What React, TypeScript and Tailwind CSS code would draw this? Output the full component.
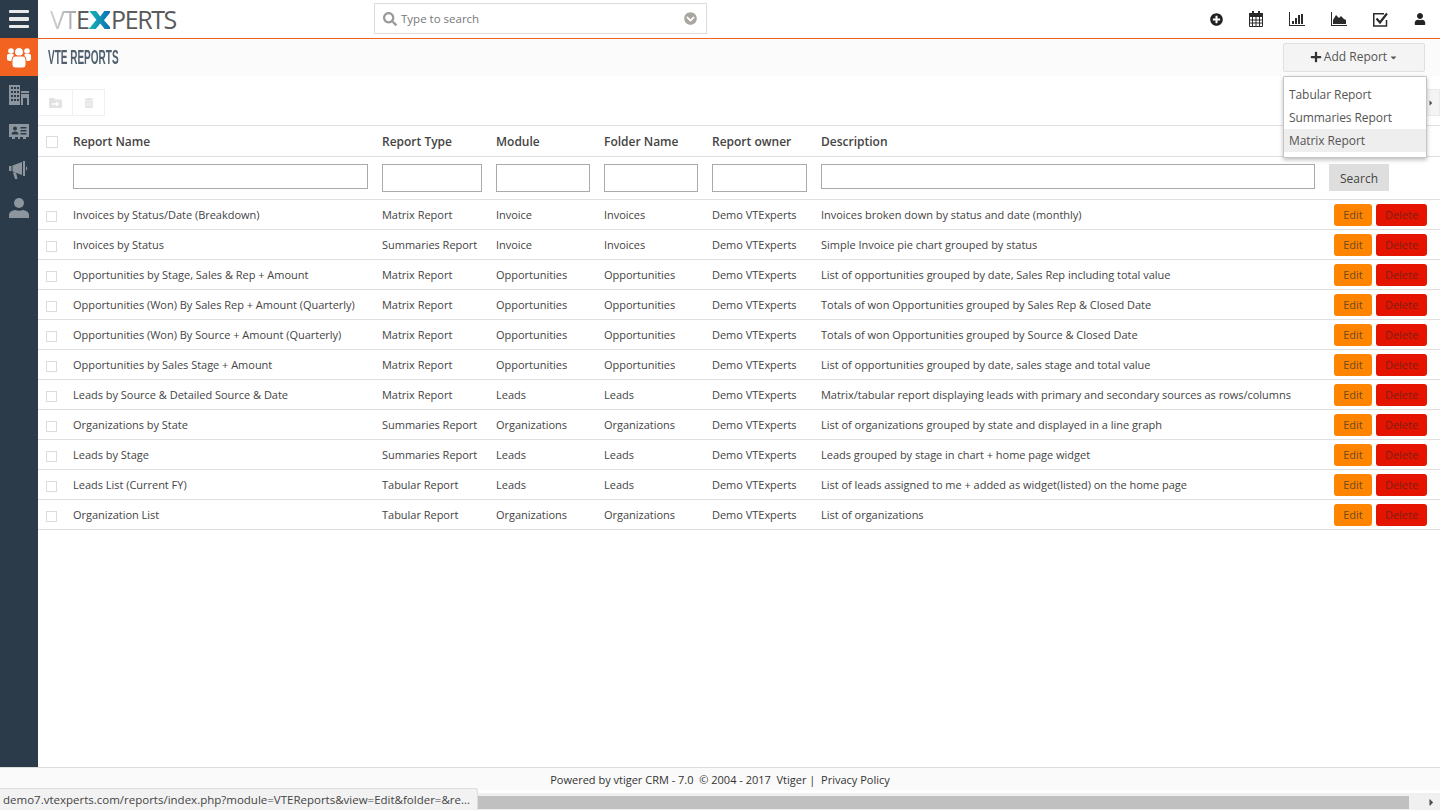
import React from "react";
import { FaSearch, FaChevronCircleDown, FaTrashAlt, FaPlus, FaCaretDown, FaCaretRight, FaUser, FaPlusCircle } from "react-icons/fa";

const rows = [
  ["Invoices by Status/Date (Breakdown)", "Matrix Report", "Invoice", "Invoices", "Invoices broken down by status and date (monthly)"],
  ["Invoices by Status", "Summaries Report", "Invoice", "Invoices", "Simple Invoice pie chart grouped by status"],
  ["Opportunities by Stage, Sales & Rep + Amount", "Matrix Report", "Opportunities", "Opportunities", "List of opportunities grouped by date, Sales Rep including total value"],
  ["Opportunities (Won) By Sales Rep + Amount (Quarterly)", "Matrix Report", "Opportunities", "Opportunities", "Totals of won Opportunities grouped by Sales Rep & Closed Date"],
  ["Opportunities (Won) By Source + Amount (Quarterly)", "Matrix Report", "Opportunities", "Opportunities", "Totals of won Opportunities grouped by Source & Closed Date"],
  ["Opportunities by Sales Stage + Amount", "Matrix Report", "Opportunities", "Opportunities", "List of opportunities grouped by date, sales stage and total value"],
  ["Leads by Source & Detailed Source & Date", "Matrix Report", "Leads", "Leads", "Matrix/tabular report displaying leads with primary and secondary sources as rows/columns"],
  ["Organizations by State", "Summaries Report", "Organizations", "Organizations", "List of organizations grouped by state and displayed in a line graph"],
  ["Leads by Stage", "Summaries Report", "Leads", "Leads", "Leads grouped by stage in chart + home page widget"],
  ["Leads List (Current FY)", "Tabular Report", "Leads", "Leads", "List of leads assigned to me + added as widget(listed) on the home page"],
  ["Organization List", "Tabular Report", "Organizations", "Organizations", "List of organizations"],
];

const cols = "grid grid-cols-[35px_309px_114px_108px_108px_109px_508px_1fr]";
const Check = ({ className = "" }: { className?: string }) => (
  <span className={"block border border-[#dcdcdc] bg-white ml-[8px] " + className} />
);

const SIDE = "#8d969e";
const BG = "#2c3b49";

const GroupIcon = () => (
  <svg width="24" height="23" viewBox="0 0 24 23">
    <g fill="#fff">
      <circle cx="4" cy="5" r="2.8" />
      <circle cx="20" cy="5" r="2.8" />
      <path d="M0 9.5q0-1.5 1.5-1.5h5v7H2.500Q0 15 0 13z" />
      <path d="M24 9.500q0-1.500-1.500-1.500h-5v7h4q2.500 0 2.500-2z" />
    </g>
    <g fill="#fff" stroke="#f26322" strokeWidth="1">
      <circle cx="12" cy="6" r="4.500" />
      <path d="M5 14q0-4 3-4h8q3 0 3 4v5q0 3-3 3H8q-3 0-3-3z" />
    </g>
  </svg>
);

const BuildingIcon = () => (
  <svg width="20" height="20" viewBox="0 0 20 20" fill={SIDE}>
    <path d="M0 0h11v20H0z" />
    <path d="M12 6h8v2h-8zM12 9h8v11h-2v-7h-4v7h-2z" />
    <g fill={BG}>
      <path d="M2 2h2v2H2zM5 2h2v2H5zM8 2h2v2H8zM2 6h2v2H2zM5 6h2v2H5zM8 6h2v2H8zM2 10h2v2H2zM5 10h2v2H5zM8 10h2v2H8zM2 14h2v2H2zM5 14h2v2H5zM8 14h2v2H8z" />
    </g>
  </svg>
);

const CardIcon = () => (
  <svg width="20" height="16" viewBox="0 0 20 16">
    <path d="M0 0h20v13H0z" fill={SIDE} />
    <path d="M3 13h3v2H3zM9 13h2v2H9zM14 13h3v2h-3z" fill={SIDE} />
    <circle cx="6" cy="4.500" r="2" fill={BG} />
    <path d="M2.500 10.500q0-3 3.500-3t3.500 3z" fill={BG} />
    <path d="M11.500 3h6v1.500h-6zM11.500 6h6v1.500h-6zM11.500 9h6v1.500h-6z" fill={BG} />
  </svg>
);

const HornIcon = () => (
  <svg width="20" height="19" viewBox="0 0 20 19" fill={SIDE}>
    <path d="M0 5h2.500v5H0zM3.500 4.500 13 1v13L3.500 10.500z" />
    <path d="M14 0h2v15h-2zM17 5q2.500 2.500 0 5z" />
    <path d="M4 11.500h3l1.500 6.500H6z" />
  </svg>
);

const PersonIcon = () => (
  <svg width="20" height="20" viewBox="0 0 20 20" fill={SIDE}>
    <circle cx="10" cy="5" r="5" />
    <path d="M0 20v-3q0-4 6-5 4 1.500 8 0 6 1 6 5v3z" />
  </svg>
);

const CalendarIcon = () => (
  <svg width="14" height="16" viewBox="0 0 14 16">
    <path d="M0.500 2.500h13v13h-13z" fill="#fff" stroke="#2b2b2b" />
    <path d="M0 2h14v4H0z" fill="#2b2b2b" />
    <path d="M3 0h2v4H3zM9 0h2v4H9z" fill="#2b2b2b" />
    <path d="M0 9h14M0 12h14M3.500 6v9M7 6v9M10.500 6v9" stroke="#2b2b2b" strokeWidth="1" fill="none" />
  </svg>
);

const BarIcon = () => (
  <svg width="16" height="14" viewBox="0 0 16 14" fill="#2b2b2b">
    <path d="M0 0h1v13h15v1H0z" />
    <path d="M3 9h2v3H3zM6 6h2v6H6zM9 3h2v9H9zM12 2h2v10h-2z" />
  </svg>
);

const AreaIcon = () => (
  <svg width="16" height="14" viewBox="0 0 16 14" fill="#2b2b2b">
    <path d="M0 0h1v13h15v1H0z" />
    <path d="M2 12V8l3-5 3 3 2-2 3 3 2 1v4z" />
  </svg>
);

const TaskIcon = () => (
  <svg width="15" height="15" viewBox="0 0 15 15" fill="none">
    <path d="M13.500 8v6H.75V1.750H11" stroke="#2b2b2b" strokeWidth="1.500" />
    <path d="M3.500 6.500 7 10.500 14 1.500" stroke="#2b2b2b" strokeWidth="2.200" />
  </svg>
);

const MoveIcon = () => (
  <svg width="13" height="10" viewBox="0 0 13 10" fill="#e2e2e2">
    <path d="M0 1q0-1 1-1h4l1 1.500h6q1 0 1 1V9q0 1-1 1H1q-1 0-1-1z" />
    <path d="M3 5.200h4V3.500L10.500 6 7 8.500V6.800H3z" fill="#fff" />
  </svg>
);

export default function App() {
  return (
    <div className="relative w-[1440px] h-[810px] overflow-hidden bg-white flex flex-col text-[#444] font-['Open_Sans',sans-serif]">
      <header className="h-[39px] shrink-0 flex items-center border-b border-[#f26322] bg-white">
        <div className="w-[38px] h-[38px] bg-[#2c3b49] flex flex-col items-center justify-center gap-[4px] shrink-0">
          <span className="block w-[20px] h-[3.5px] rounded-[1px] bg-[#e8eaec]" />
          <span className="block w-[20px] h-[3.5px] rounded-[1px] bg-[#e8eaec]" />
          <span className="block w-[20px] h-[3.5px] rounded-[1px] bg-[#e8eaec]" />
        </div>
        <div className="w-[336px] pl-[12px] shrink-0 text-[25px] leading-none font-normal tracking-[-1.4px] whitespace-nowrap">
          <span className="bg-gradient-to-r from-[#d2d2d2] to-[#a8a8a8] bg-clip-text text-transparent">VT</span>
          <span className="text-[#5a5a5a]">E</span>
          <span className="inline-block mx-[3px] scale-x-[1.28] font-extrabold bg-gradient-to-r from-[#1fb5b0] to-[#0f6fb5] bg-clip-text text-transparent">X</span>
          <span className="text-[#5a5a5a]">PERTS</span>
        </div>
        <div className="w-[333px] h-[31px] shrink-0 -mt-[1px] border border-[#dcdcdc] flex items-center pl-[8px] pr-[9px] bg-white">
          <FaSearch className="text-[#999] text-[14px] mr-[4px]" />
          <span className="text-[11.5px] text-[#777] flex-1">Type to search</span>
          <FaChevronCircleDown className="text-[#a9a5a0] text-[13px]" />
        </div>
        <div className="ml-auto flex items-center gap-[26px] mr-[14px] text-[#222]">
          <FaPlusCircle className="text-[13px]" />
          <CalendarIcon />
          <BarIcon />
          <AreaIcon />
          <TaskIcon />
          <FaUser className="text-[12px]" />
        </div>
      </header>

      <div className="flex flex-1 min-h-0">
        <aside className="w-[38px] shrink-0 bg-[#2c3b49] flex flex-col items-center">
          <div className="w-[38px] h-[37px] bg-[#f26322] flex items-center justify-center pb-[1px]"><GroupIcon /></div>
          <div className="h-[37px] flex items-center justify-center"><BuildingIcon /></div>
          <div className="h-[38px] flex items-center justify-center"><CardIcon /></div>
          <div className="h-[38px] flex items-center justify-center"><HornIcon /></div>
          <div className="h-[38px] flex items-center justify-center"><PersonIcon /></div>
        </aside>

        <main className="flex-1 min-w-0 flex flex-col">
          <div className="h-[37px] shrink-0 bg-[#fbfbfb] flex items-center justify-between pl-[10px] pr-[15px]">
            <h1 className="origin-left scale-x-[0.5] w-[70px] mb-[2px] text-[20px] leading-none font-bold text-[#50606f] whitespace-nowrap font-['Liberation_Sans',sans-serif]">VTE REPORTS</h1>
            <button className="w-[142px] h-[29px] mt-[-1px] bg-[#f4f4f4] border border-[#e0e0e0] rounded-[2px] flex items-center justify-center text-[12px] text-[#555]">
              <FaPlus className="text-[12px] mr-[2px] text-[#333]" />
              Add Report
              <FaCaretDown className="text-[9px] ml-[2px]" />
            </button>
          </div>

          <div className="h-[49px] shrink-0 relative flex items-start pt-[13px]">
            <div className="h-[27px] w-[35px] border border-[#f0f0f0] border-l-0 flex items-center justify-center">
              <MoveIcon />
            </div>
            <div className="h-[27px] w-[32px] border border-[#f0f0f0] border-l-0 flex items-center justify-center text-[#e2e2e2]">
              <FaTrashAlt className="text-[10px]" />
            </div>
            <div className="ml-auto h-[27px] w-[14px] bg-[#f4f4f4] border border-[#eaeaea] flex items-center text-[#555]">
              <FaCaretRight className="text-[8px]" />
            </div>
          </div>

          <div className="border-t border-[#dfdfdf] flex-1 min-h-0">
            <div className={cols + " items-center h-[31px] border-b border-[#dfdfdf] text-[12px] font-semibold text-[#444] pt-[1px]"}>
              <Check className="w-[12px] h-[12px]" />
              <div>Report Name</div>
              <div>Report Type</div>
              <div>Module</div>
              <div>Folder Name</div>
              <div>Report owner</div>
              <div>Description</div>
              <div />
            </div>
            <div className={cols + " items-start pt-[7px] h-[43px] border-b border-[#dfdfdf]"}>
              <div />
              <div><div className="w-[295px] h-[25px] border border-[#aaa] bg-white" /></div>
              <div><div className="w-[100px] h-[28px] border border-[#aaa] bg-white" /></div>
              <div><div className="w-[94px] h-[28px] border border-[#aaa] bg-white" /></div>
              <div><div className="w-[94px] h-[28px] border border-[#aaa] bg-white" /></div>
              <div><div className="w-[95px] h-[28px] border border-[#aaa] bg-white" /></div>
              <div><div className="w-[494px] h-[25px] border border-[#aaa] bg-white" /></div>
              <div><button className="w-[60px] h-[27px] bg-[#dedede] text-[12px] pt-[3px] text-[#444]">Search</button></div>
            </div>
            {rows.map((r) => (
              <div key={r[0]} className={cols + " items-center h-[30px] border-b border-[#dfdfdf] text-[11px] tracking-[-0.02px] text-[#444]"}>
                <Check className="w-[11px] h-[11px] mt-[3px]" />
                <div className="whitespace-nowrap pt-[2px]">{r[0]}</div>
                <div className="whitespace-nowrap pt-[2px]">{r[1]}</div>
                <div className="whitespace-nowrap pt-[2px]">{r[2]}</div>
                <div className="whitespace-nowrap pt-[2px]">{r[3]}</div>
                <div className="whitespace-nowrap pt-[2px]">Demo VTExperts</div>
                <div className="whitespace-nowrap pt-[2px]">{r[4]}</div>
                <div className="flex gap-[4px] pl-[5px]">
                  <button className="w-[38px] h-[22px] bg-[#ff8400] rounded-[3px] text-[11px] pt-[1px] text-[#6d4a1f]">Edit</button>
                  <button className="w-[51px] h-[22px] bg-[#e51400] rounded-[3px] text-[11px] pt-[1px] text-[#7d1f14]">Delete</button>
                </div>
              </div>
            ))}
          </div>
        </main>
      </div>

      <footer className="h-[23px] shrink-0 border-t border-[#dcdcdc] bg-[#fafafa] flex items-center justify-center text-[11px] text-[#333] pt-[3px] whitespace-pre">
        Powered by vtiger CRM - 7.0  © 2004 - 2017  Vtiger |  Privacy Policy
      </footer>
      <div className="h-[20px] shrink-0 pt-[3px] bg-white">
        <div className="h-[17px] bg-[#f0f0f0] flex items-center pl-[478px] pt-[1px]">
          <div className="h-[13px] w-[931px] bg-[#c0c0c0]" />
          <FaCaretRight className="text-[11px] text-[#505050] ml-[17px]" />
        </div>
      </div>

      <div className="absolute left-0 bottom-0 w-[478px] h-[22px] bg-[#f2f2f2] border-t border-r border-[#dcdcdc] rounded-tr-[3px] flex items-center pl-[3px] text-[11.5px] text-[#444] whitespace-nowrap">
        demo7.vtexperts.com/reports/index.php?module=VTEReports&amp;view=Edit&amp;folder=&amp;re...
      </div>

      <div className="absolute left-[1283px] top-[76px] w-[144px] h-[82px] bg-white border border-[#c4c4c4] rounded-[1px] shadow-[0_2px_4px_rgba(0,0,0,0.25)] pt-[6px] text-[12px] tracking-[-0.08px] text-[#555]">
        <div className="h-[23px] flex items-center pl-[5px]">Tabular Report</div>
        <div className="h-[23px] flex items-center pl-[5px]">Summaries Report</div>
        <div className="h-[23px] flex items-center pl-[5px] bg-[#eeeeee]">Matrix Report</div>
      </div>
    </div>
  );
}
